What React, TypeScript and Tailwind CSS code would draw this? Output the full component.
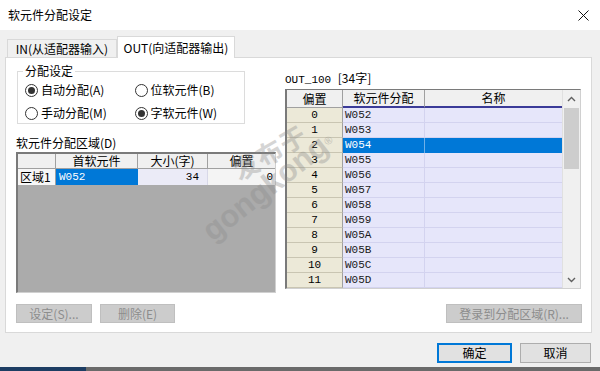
import React from "react";

const rows = ["W052", "W053", "W054", "W055", "W056", "W057", "W058", "W059", "W05A", "W05B", "W05C", "W05D"];

function Radio({ label, checked }: { label: string; checked?: boolean }) {
  return (
    <div className="flex items-center h-[14px] w-[112px] gap-[3px]">
      <span className="w-[13px] h-[13px] rounded-full border border-[#333] bg-white flex items-center justify-center">
        {checked && <span className="w-[7px] h-[7px] rounded-full bg-[#333]" />}
      </span>
      <span className="text-[12px] leading-none text-black">{label}</span>
    </div>
  );
}

function Chevron({ up }: { up?: boolean }) {
  return (
    <svg width="9" height="6" viewBox="0 0 9 6">
      <path d={up ? "M1 5 L4.5 1.5 L8 5" : "M1 1 L4.5 4.5 L8 1"} fill="none" stroke="#606060" strokeWidth="1.4" />
    </svg>
  );
}

export default function App() {
  return (
    <div className="relative w-[600px] h-[371px] overflow-hidden flex flex-col bg-[#f0f0f0] font-['Noto_Sans_CJK_SC',sans-serif] text-black">
      {/* title bar */}
      <div className="h-[30px] bg-white flex items-center justify-between pl-[8px] pr-[11px]">
        <span className="text-[12px]">软元件分配设定</span>
        <svg width="11" height="11" viewBox="0 0 11 11">
          <path d="M0.5 0.5 L10.5 10.5 M10.5 0.5 L0.5 10.5" stroke="#111" strokeWidth="1" />
        </svg>
      </div>

      <div className="flex-1 flex flex-col px-[5px] pt-[6px]">
        {/* tabs */}
        <div className="flex items-end h-[21px] pl-[2px]">
          <div className="h-[18px] w-[110px] border border-b-0 border-[#d9d9d9] bg-[#f0f0f0] flex items-center justify-center text-[12px] leading-none">
            IN(从适配器输入)
          </div>
          <div className="h-[22px] w-[118px] -mb-[1px] border border-b-0 border-[#d9d9d9] bg-white flex items-center justify-center text-[12px] leading-none relative z-10">
            OUT(向适配器输出)
          </div>
        </div>

        {/* panel */}
        <div className="w-[587px] h-[276px] border border-[#d9d9d9] bg-white flex flex-col">
          <div className="flex pl-[10px] gap-[9px] h-[235px]">
            {/* left column */}
            <div className="w-[260px] flex flex-col">
              <div className="relative mt-[13px] ml-[1px] w-[228px] h-[53px] border border-[#dcdcdc] flex flex-col pl-[7px] pt-[11px] gap-[9px]">
                <span className="absolute -top-[8px] left-[5px] bg-white px-[2px] text-[12px] leading-[14px]">分配设定</span>
                <div className="flex">
                  <Radio label="自动分配(A)" checked />
                  <Radio label="位软元件(B)" />
                </div>
                <div className="flex">
                  <Radio label="手动分配(M)" />
                  <Radio label="字软元件(W)" checked />
                </div>
              </div>
              <div className="mt-[12px] h-[14px] text-[12px] leading-[14px]">软元件分配区域(D)</div>
              <div className="mt-[2px] h-[141px] flex flex-col border-l-2 border-t-2 border-[#7a7a7a] border-r border-b border-r-[#d0d0d0] border-b-[#d0d0d0]">
                <div className="flex h-[15px] bg-[#f0f0f0] border-b border-[#a0a0a0] text-[12px] leading-none">
                  <div className="w-[38px] border-r border-[#a0a0a0]" />
                  <div className="w-[82px] border-r border-[#a0a0a0] flex items-center justify-center">首软元件</div>
                  <div className="w-[70px] border-r border-[#a0a0a0] flex items-center justify-center">大小(字)</div>
                  <div className="flex-1 flex items-center justify-center">偏置</div>
                </div>
                <div className="flex h-[16px] text-[12px] leading-none">
                  <div className="w-[38px] bg-[#f7f7f7] border-r border-[#a0a0a0] flex items-center pl-[2px]">区域1</div>
                  <div className="w-[82px] bg-[#0078d7] text-white flex items-center pl-[3px] font-['Liberation_Mono',monospace] text-[11px]">W052</div>
                  <div className="w-[70px] bg-[#ebebf7] border-r border-[#d8d8e8] flex items-center justify-end pr-[8px] font-['Liberation_Mono',monospace] text-[11px]">34</div>
                  <div className="flex-1 bg-[#f4f4f4] flex items-center justify-end pr-[2px] font-['Liberation_Mono',monospace] text-[11px]">0</div>
                </div>
                <div className="flex-1 bg-[#ababab]" />
              </div>
            </div>

            {/* right column */}
            <div className="w-[296px] flex flex-col">
              <div className="mt-[13px] h-[14px] text-[12px] leading-[14px]">
                <span className="font-['Liberation_Mono',monospace] text-[11px]">OUT_100 </span>[34字]
              </div>
              <div className="mt-[4px] h-[200px] flex border-l-2 border-t border-[#7a7a7a] border-r border-b border-r-[#d0d0d0] border-b-[#d0d0d0]">
                <div className="w-[275px] flex flex-col">
                  <div className="flex h-[18px] bg-[#f0f0f0] text-[12px] leading-none">
                    <div className="w-[56px] border-r border-b border-[#a0a0a0] flex items-center justify-center">偏置</div>
                    <div className="w-[82px] border-r border-[#a0a0a0] border-b-2 border-b-[#3b3b98] flex items-center justify-center">软元件分配</div>
                    <div className="flex-1 border-b-2 border-[#3b3b98] flex items-center justify-center">名称</div>
                  </div>
                  {rows.map((w, i) => {
                    const sel = i === 2;
                    return (
                      <div key={w} className="flex h-[15px] font-['Liberation_Mono',monospace] text-[11px] leading-none">
                        <div className="w-[56px] bg-[#ece9d8] border-r border-b border-r-[#a0a0a0] border-b-[#c9c5b2] flex items-center justify-center">{i}</div>
                        {sel ? (
                          <>
                            <div className="w-[82px] bg-[#0078d7] text-white border-r border-[#6fb0e8] flex items-center pl-[2px]">{w}</div>
                            <div className="flex-1 bg-[#0078d7]" />
                          </>
                        ) : (
                          <>
                            <div className="w-[82px] bg-[#e6e6fa] border-r border-b border-[#d3d3ef] flex items-center pl-[2px] text-[#1a1a1a]">{w}</div>
                            <div className="flex-1 bg-[#e6e6fa] border-b border-[#d3d3ef]" />
                          </>
                        )}
                      </div>
                    );
                  })}
                </div>
                {/* scrollbar */}
                <div className="w-[18px] bg-[#f0f0f0] border-l border-[#e0e0e0] flex flex-col items-center">
                  <div className="h-[18px] w-full flex items-center justify-center">
                    <Chevron up />
                  </div>
                  <div className="w-[15px] h-[61px] bg-[#cdcdcd]" />
                  <div className="flex-1" />
                  <div className="h-[17px] w-full flex items-center justify-center">
                    <Chevron />
                  </div>
                </div>
              </div>
            </div>
          </div>

          {/* panel buttons */}
          <div className="mt-[11px] flex items-center pl-[10px] pr-[9px] text-[12px] leading-none text-[#8d8d8d]">
            <div className="w-[76px] h-[19px] bg-[#cccccc] border border-[#bfbfbf] flex items-center justify-center">设定(S)...</div>
            <div className="ml-[8px] w-[75px] h-[19px] bg-[#cccccc] border border-[#bfbfbf] flex items-center justify-center">删除(E)</div>
            <div className="ml-auto w-[136px] h-[19px] bg-[#cccccc] border border-[#bfbfbf] flex items-center justify-center">登录到分配区域(R)...</div>
          </div>
        </div>

        {/* dialog buttons */}
        <div className="mt-[10px] flex justify-end gap-[8px] pr-[4px] text-[12px] leading-none">
          <div className="w-[75px] h-[20px] bg-[#e1e1e1] border-2 border-[#0078d7] flex items-center justify-center">确定</div>
          <div className="w-[71px] h-[20px] bg-[#e1e1e1] border border-[#adadad] flex items-center justify-center">取消</div>
        </div>
      </div>

      {/* taskbar edge */}
      <div className="h-[4px] flex">
        <div className="w-[86px] bg-[#1d3d63]" />
        <div className="flex-1 bg-[#6a6a6a]" />
      </div>

      {/* watermark */}
      <div className="absolute left-[234px] top-[172px] -translate-y-1/2 origin-left rotate-[-30deg] pointer-events-none text-[#8a8a8a] opacity-35 font-bold leading-none text-[26px] tracking-[1px] whitespace-nowrap">
        发布于
      </div>
      <div className="absolute left-[206px] top-[234px] -translate-y-1/2 origin-left rotate-[-38deg] pointer-events-none text-[#8a8a8a] opacity-35 font-bold leading-none text-[31px] font-['Liberation_Sans',sans-serif] whitespace-nowrap">
        gongkong<sup className="text-[11px]">®</sup>
      </div>
    </div>
  );
}
